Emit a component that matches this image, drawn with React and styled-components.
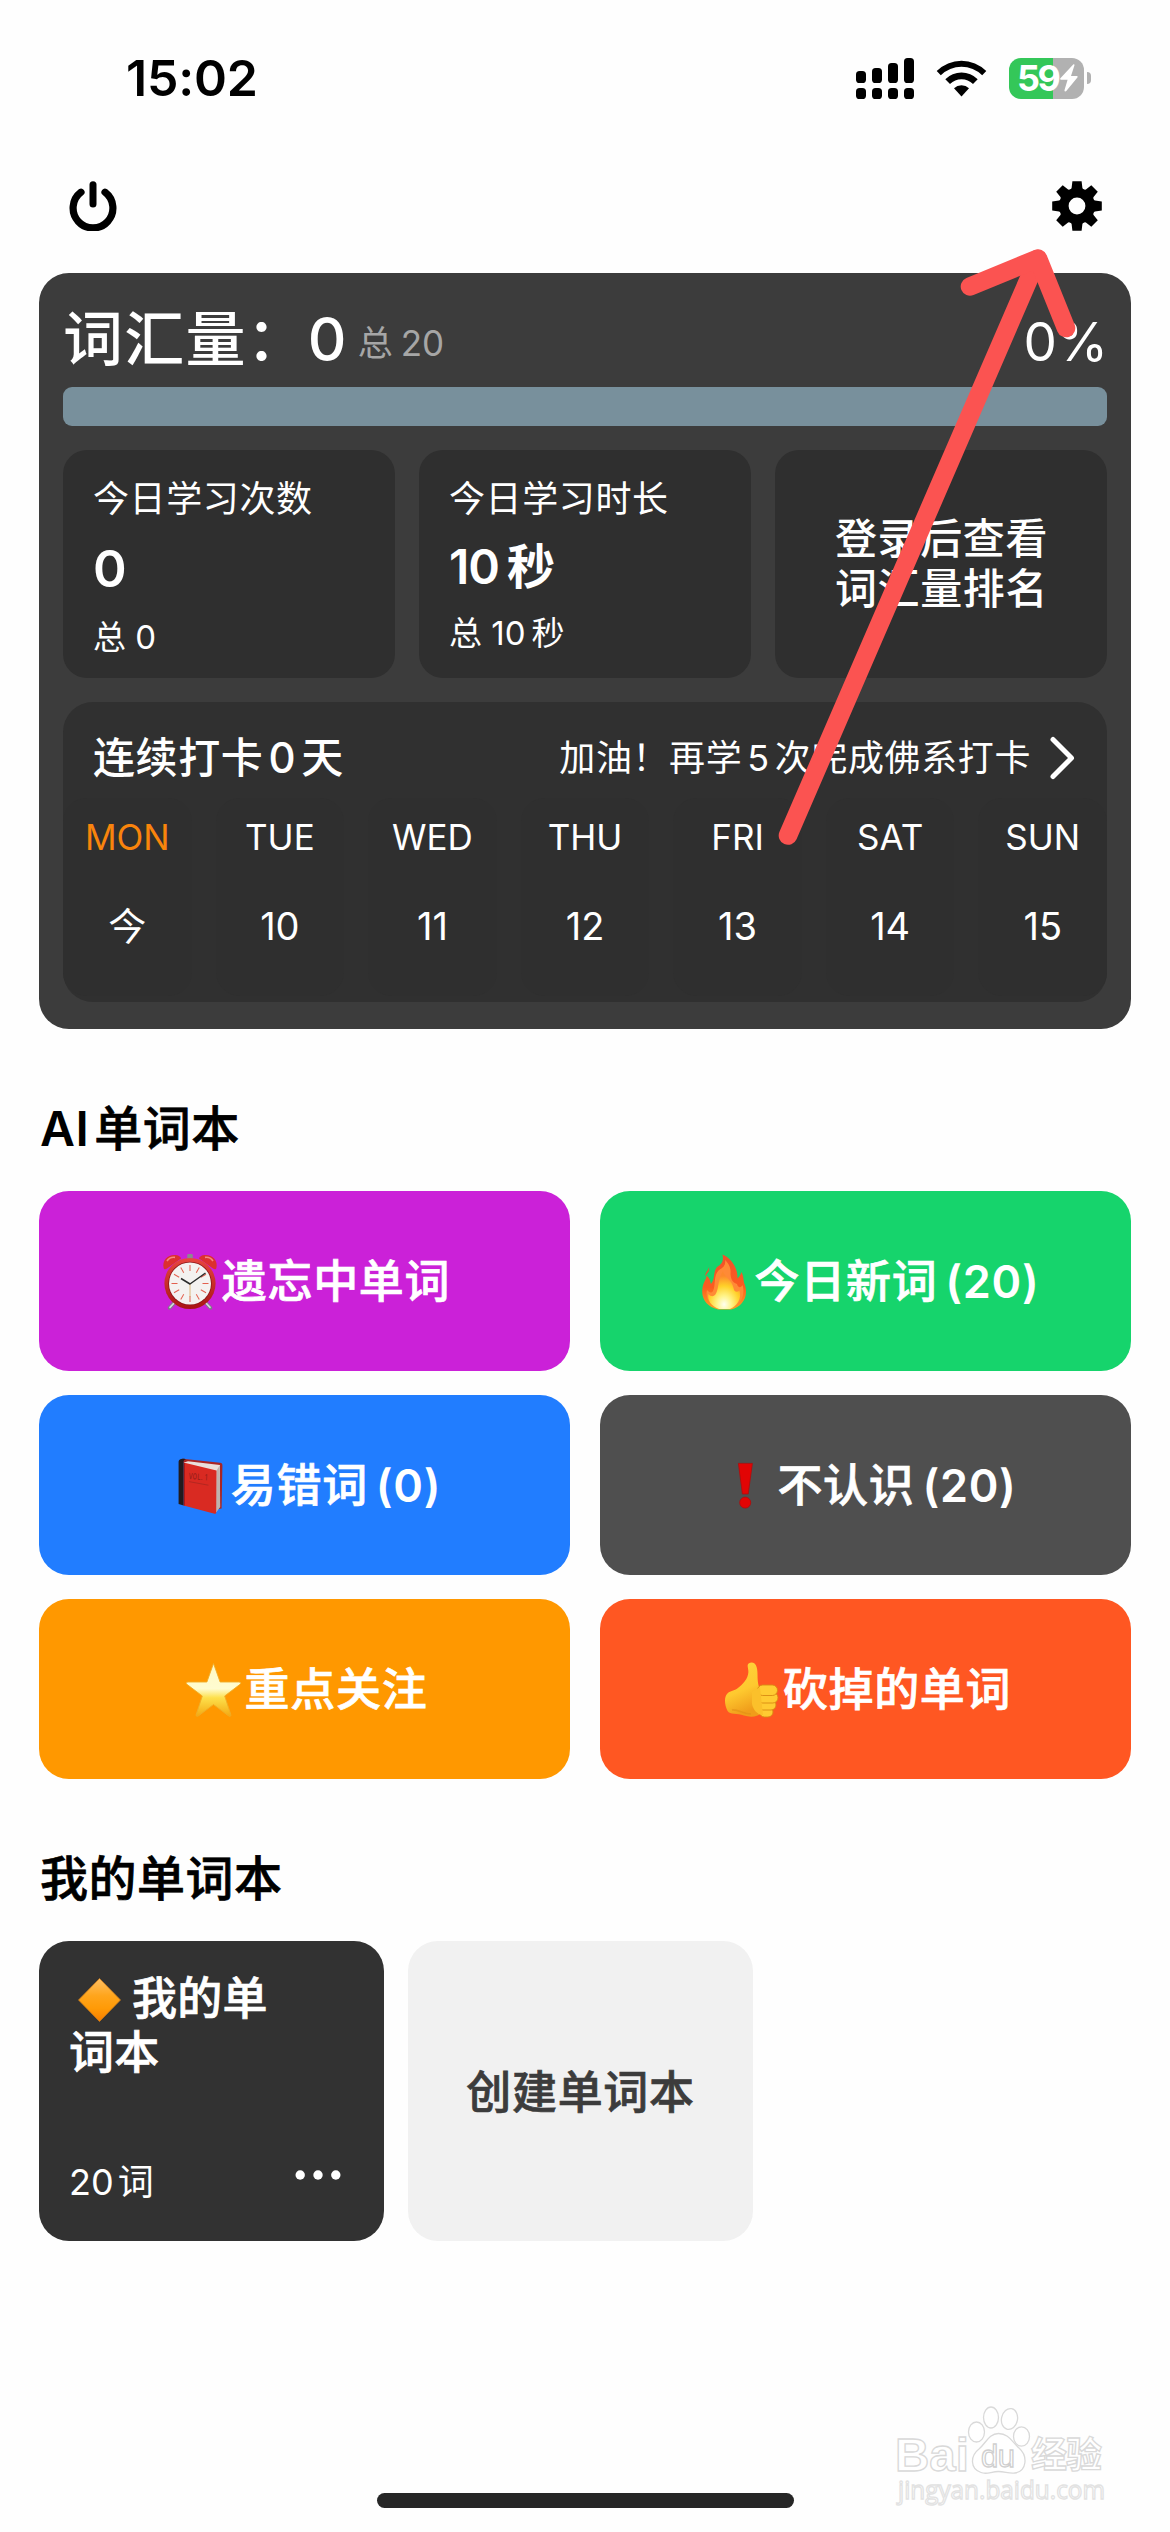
import React from 'react';
import styled, { createGlobalStyle } from 'styled-components';

const GlobalStyle = createGlobalStyle`
  * {
    box-sizing: border-box;
  }

  body {
    margin: 0;
    background: #fefefe;
    font-family: Inter, 'Noto Sans CJK SC', sans-serif;
    color: #000;
  }

  svg {
    display: block;
    flex-shrink: 0;
  }
`;

const Page = styled.div`
  position: relative;
  width: 1170px;
  height: 2532px;
  padding: 0 39px;
  display: flex;
  flex-direction: column;
  overflow: hidden;
`;

const StatusBar = styled.header`
  height: 156px;
  padding: 0 40px 0 87px;
  display: flex;
  align-items: center;
  justify-content: space-between;
`;

const Clock = styled.span`
  font-size: 50px;
  line-height: 60px;
  font-weight: 600;
  letter-spacing: -0.2px;
`;

const StatusIcons = styled.div`
  display: flex;
  align-items: center;
  gap: 22px;
`;

const Battery = styled.div`
  display: flex;
  align-items: center;
  gap: 3px;
`;

const BatteryBody = styled.div`
  width: 75px;
  height: 41px;
  padding-left: 8px;
  border-radius: 12px;
  background: linear-gradient(90deg, #34c759 59%, #b1b1b1 59%);
  color: #fff;
  display: flex;
  align-items: center;
  font-size: 36px;
  line-height: 41px;
  font-weight: 700;
  letter-spacing: -2.6px;

  svg {
    margin-left: 2px;
  }
`;

const BatteryTip = styled.div`
  width: 4px;
  height: 12px;
  border-radius: 0 6px 6px 0;
  background: #b1b1b1;
`;

const TopActions = styled.div`
  height: 100px;
  padding: 0 29px 0 30px;
  display: flex;
  align-items: center;
  justify-content: space-between;
`;

const Summary = styled.section`
  height: 756px;
  margin-top: 17px;
  padding: 24px;
  border-radius: 30px;
  background: #3c3c3c;
  color: #fff;
  display: flex;
  flex-direction: column;
`;

const SummaryHead = styled.div`
  height: 90px;
  display: flex;
  align-items: baseline;
`;

const VocabTitle = styled.span`
  font-size: 60px;
  line-height: 84px;
  font-weight: 500;
  letter-spacing: 1.2px;
`;

const VocabTotal = styled.span`
  margin-left: 10px;
  padding-top: 1px;
  align-self: center;
  font-size: 35px;
  line-height: 80px;
  color: #a6a6a6;
`;

const Percent = styled.span`
  margin-left: auto;
  font-size: 53px;
  letter-spacing: -1px;
`;

const Progress = styled.div`
  height: 39px;
  border-radius: 9px;
  background: #78909c;
`;

const Stats = styled.div`
  margin: 24px 0;
  display: grid;
  grid-template-columns: repeat(3, 1fr);
  gap: 24px;
`;

const StatCard = styled.div`
  height: 228px;
  padding: 25px 30px 0;
  border-radius: 24px;
  background: #2f2f2f;
`;

const StatLabel = styled.div`
  font-size: 36px;
  line-height: 48px;
  letter-spacing: 0.6px;
`;

const StatValue = styled.div`
  margin-top: 13px;
  font-size: ${(props) => props.$size || 48}px;
  line-height: ${(props) => (props.$size ? 65 : 61)}px;
  font-weight: 600;
  letter-spacing: -1px;
`;

const StatTotal = styled.div`
  margin-top: 12px;
  font-size: 33px;
  line-height: 48px;
`;

const Unit = styled.span`
  margin-left: ${(props) => props.$gap || 8}px;
  font-weight: ${(props) => props.$weight || 'inherit'};
`;

// medium text thickened a little, halfway to bold
const Strong = styled.span`
  font-weight: 500;
  -webkit-text-stroke: 0.7px currentColor;
`;

const LoginHint = styled(StatCard)`
  padding: 0 0 0 1px;
  display: flex;
  align-items: center;
  justify-content: center;
  font-size: 42px;
  line-height: 50px;
  font-weight: 500;
  letter-spacing: 0.6px;
`;

const Streak = styled.div`
  height: 300px;
  border-radius: 30px;
  background: #303030;
`;

const StreakHead = styled.div`
  height: 96px;
  padding: 15px 30px 0;
  display: flex;
  align-items: center;
`;

const StreakTitle = styled.span`
  font-size: 42px;
  line-height: 56px;
  font-weight: 500;
  letter-spacing: 0.6px;
`;

const Num = styled.span`
  margin: 0 5px;
`;

const StreakGoal = styled.span`
  margin: 0 19px 0 auto;
  font-size: 36px;
  line-height: 56px;
  letter-spacing: 0.6px;
`;

const Week = styled.div`
  display: grid;
  grid-template-columns: repeat(7, 1fr);
  gap: 24px;
`;

const Day = styled.div`
  height: 198px;
  border-radius: 24px;
  background: #2f2f2f;
  display: flex;
  flex-direction: column;
  align-items: center;
`;

const DayName = styled.span`
  margin-top: 15px;
  font-size: 35px;
  line-height: 48px;
  color: ${(props) => (props.$today ? '#f9840c' : '#fff')};
`;

const DayNumber = styled.span`
  margin-top: 41px;
  font-size: 38px;
  line-height: 48px;
`;

const SectionTitle = styled.h2`
  margin: 70px 0 0;
  height: 60px;
  padding-left: 1px;
  font-size: 48px;
  line-height: 60px;
  font-weight: 600;
  letter-spacing: 0.5px;

  span {
    margin-left: ${(props) => props.$gap || 0}px;
  }
`;

const Tiles = styled.div`
  margin-top: 32px;
  display: grid;
  grid-template-columns: 1fr 1fr;
  gap: 24px 30px;
`;

const Tile = styled.div`
  height: 180px;
  padding: 1px 0 0 2px;
  border-radius: 30px;
  background: ${(props) => props.$color};
  color: #fff;
  display: flex;
  align-items: center;
  justify-content: center;
  font-size: 45px;
  line-height: 60px;
  letter-spacing: 0.7px;

  svg {
    margin-right: 1px;
  }
`;

const Books = styled.div`
  margin-top: 32px;
  display: flex;
  gap: 24px;
`;

const Book = styled.div`
  width: 345px;
  height: 300px;
  padding: 31px 30px 34px;
  border-radius: 30px;
  background: #323232;
  color: #fff;
  display: flex;
  flex-direction: column;
  justify-content: space-between;
`;

const BookName = styled.div`
  font-size: 45px;
  line-height: 54px;
  letter-spacing: 0.3px;

  svg {
    display: inline-block;
    margin: 0 4px 0 2px;
    vertical-align: -8px;
  }
`;

const BookFoot = styled.div`
  display: flex;
  align-items: center;
  justify-content: space-between;
  padding-right: 13px;
  font-size: 36px;
  line-height: 50px;
`;

const NewBook = styled(Book)`
  padding: 4px 0 0;
  align-items: center;
  justify-content: center;
  background: #f1f1f1;
  color: #3c3c3c;
  font-size: 45px;
  line-height: 60px;
  letter-spacing: 0.7px;
`;

const HomeIndicator = styled.div`
  width: 417px;
  height: 15px;
  margin: auto auto 24px;
  border-radius: 8px;
  background: #262626;
`;

const Overlay = styled.svg`
  position: absolute;
  left: ${(props) => props.$x}px;
  top: ${(props) => props.$y}px;
  pointer-events: none;
`;

const SignalIcon = () => (
  <svg width="58" height="41" viewBox="0 0 58 41">
    <rect x="0" y="13" width="10" height="12" rx="3.6" />
    <rect x="16" y="10" width="10" height="15" rx="3.6" />
    <rect x="32" y="5" width="10" height="20" rx="3.6" />
    <rect x="48" y="0" width="10" height="25" rx="3.6" />
    {[0, 16, 32, 48].map((x) => (
      <rect key={x} x={x} y="30" width="10" height="11" rx="3.6" />
    ))}
  </svg>
);

const WifiIcon = () => (
  <svg width="51" height="41" viewBox="0 0 51 41">
    <path d="M.7 13 A35 35 0 0 1 50.3 13 L46.2 17.3 A29.5 29.5 0 0 0 4.8 17.3Z" />
    <path d="M9.3 21.2 A23 23 0 0 1 41.7 21.2 L37 26 A16.5 16.5 0 0 0 14 26Z" />
    <path d="M18 30.2 A11 11 0 0 1 33 30.2 L25.5 38.5Z" />
  </svg>
);

const BoltIcon = () => (
  <svg width="18" height="28" viewBox="0 0 18 28" fill="#fff">
    <path d="M13.2.6 L.4 14.3 C-.1 15 .2 15.7 1 15.7 H7.6 L4.6 25.8 C4.2 27.3 5.3 28 6.3 27 L17.4 13.4 C18 12.6 17.6 12 16.8 12 H11 L14.4 1.6 C14.8.2 14-.2 13.2.6Z" />
  </svg>
);

const PowerIcon = () => (
  <svg width="48" height="50" viewBox="0 0 48 50" fill="none" stroke="#000" strokeWidth="7.2" strokeLinecap="round">
    <path d="M12 11.2 A19.9 19.9 0 1 0 36 11.2" />
    <path d="M24 3.8 V23" strokeWidth="7" />
  </svg>
);

const GearIcon = () => (
  <svg width="50" height="50" viewBox="-25 -25 50 50">
    <circle r="13.2" fill="none" stroke="#000" strokeWidth="9.6" />
    {[0, 45, 90, 135, 180, 225, 270, 315].map((deg) => (
      <path key={deg} d="M-7 -15 L-5.4 -18 L-4.6 -24.8 H4.6 L5.4 -18 L7 -15Z" transform={`rotate(${deg})`} />
    ))}
  </svg>
);

const ChevronIcon = () => (
  <svg width="27" height="44" viewBox="0 0 27 44" fill="none" stroke="#fff" strokeWidth="5" strokeLinecap="round" strokeLinejoin="round">
    <path d="M3 3.5 L21.5 22 L3 40.5" />
  </svg>
);

const DotsIcon = () => (
  <svg width="46" height="30" viewBox="0 0 46 30" fill="#fff">
    <circle cx="5.2" cy="8" r="4.7" />
    <circle cx="23" cy="8" r="4.7" />
    <circle cx="40.8" cy="8" r="4.7" />
  </svg>
);

const AlarmIcon = () => (
  <svg width="60" height="56" viewBox="0 0 60 56">
    <defs>
      <linearGradient id="alarmRim" x1="0" y1="0" x2="0" y2="1">
        <stop offset="0" stopColor="#e8473f" />
        <stop offset="1" stopColor="#a81414" />
      </linearGradient>
    </defs>
    <path d="M14 48 L8.5 54 M44 48 L49.5 54" stroke="#7c7d84" strokeWidth="3.4" strokeLinecap="round" />
    <path d="M14 48 L9 53.4 M44 48 L49 53.4" stroke="#d5d7dc" strokeWidth="1.6" strokeLinecap="round" />
    <rect x="26.2" y="0" width="5.6" height="5" rx="1.2" fill="#8d8790" />
    <path d="M2.6 14 C.8 6 7 0 15 1 C18 1.5 20 3 20 4.6 L6 14.6 C4.3 15.6 3 15.4 2.6 14Z" fill="#dc3030" />
    <path d="M55.4 14 C57.2 6 51 0 43 1 C40 1.5 38 3 38 4.6 L52 14.6 C53.7 15.6 55 15.4 55.4 14Z" fill="#dc3030" />
    <path d="M6 7 C8 4 11 3 14 3.4 M44 3.4 C47 3 50 4 52 7" fill="none" stroke="#f48a80" strokeWidth="1.6" />
    <circle cx="29" cy="29.5" r="25.6" fill="url(#alarmRim)" />
    <circle cx="29" cy="29.5" r="21.8" fill="#8c1616" />
    <circle cx="29" cy="29.5" r="21" fill="#f4f2f0" />
    {[...Array(12)].map((_, i) => (
      <path key={i} d="M29 11 V17" stroke="#e2604f" strokeWidth="1" transform={`rotate(${i * 30} 29 29.5)`} />
    ))}
    <path d="M29 30 V43" stroke="#d8b070" strokeWidth="0.9" />
    <path d="M20 24.5 L29 30 L44.5 19" fill="none" stroke="#2c2c2c" strokeWidth="1.5" strokeLinejoin="round" />
  </svg>
);

const FireIcon = () => (
  <svg width="60" height="56" viewBox="0 0 60 56">
    <defs>
      <linearGradient id="fireOuter" x1="0" y1="0" x2="0" y2="1">
        <stop offset="0" stopColor="#f1502a" />
        <stop offset="0.6" stopColor="#fb5c20" />
        <stop offset="1" stopColor="#fba321" />
      </linearGradient>
      <radialGradient id="fireInner" cx="0.5" cy="0.88" r="0.75">
        <stop offset="0" stopColor="#fffff0" />
        <stop offset="0.3" stopColor="#fff48a" />
        <stop offset="0.65" stopColor="#ffd129" />
        <stop offset="1" stopColor="#fd8a2c" />
      </radialGradient>
    </defs>
    <path d="M28.5 .5 C35 3 44 12 43.5 24.5 C46 22 47 20 47.3 18 C50 22 49 26 50.5 30 C55 42 49 53 37 55.5 H24 C13 53 7 45 8.4 35 C8.8 29 12 26 12.6 21.5 C15.6 24 16.4 27 16.8 30 C21.5 25 18.8 18 23 13 C29 10 29.5 6 28.5 .5Z" fill="url(#fireOuter)" />
    <path d="M15 13 C14.4 17 10.6 18.8 11.3 22 C13 19 16 17.5 15 13Z" fill="#f1502a" />
    <path d="M31 6 C36 11 37 15 36.5 20 C37 27 40 29 43 30 C44 34 47 34 48.6 31 C52 43 45 52 36 55 H25 C16 52 11 44 13 36 C15 38 17 40 19 37 C22 32 19 21 25 16 C30 13.5 32 10 31 6Z" fill="#ff8a36" />
    <path d="M29 17 C30.5 23 38 26 39.5 34 C40.2 38 43 39 45.5 36.5 C48 45 43 52 36 55 H25 C17 52 13 46 14.4 40 C17 43 20 43 22 39.5 C25 34 24 24 29 17Z" fill="url(#fireInner)" />
  </svg>
);

const RedBookIcon = () => (
  <svg width="60" height="56" viewBox="0 0 60 56">
    <path d="M10 2.5 C12 .2 14 .8 17 1.2 L50 4.8 C52 5 52.6 6 52.4 8 L51.6 50.5 L46 51.5 L16 6Z" fill="#a92524" />
    <path d="M14 4.5 L18 3.2 L50 7 L50 48 L46 54 L15 45Z" fill="#e9dfdb" />
    <path d="M49.8 7 L46.4 13 L46 54.5 L50.2 49Z" fill="#bfb2ae" />
    <path d="M13.5 4.6 L46.5 12.6 L46.2 54.8 C46 55.8 45.4 56 44.6 55.7 L13.5 47.4Z" fill="#d92a22" />
    <path d="M8.6 3.4 C9 1 12 .2 16 1.3 C13.5 2 13.3 3.2 13.6 5 V47.5 L8.6 46Z" fill="#221b1e" />
    <path d="M14.4 5 V47.5" stroke="#a41717" strokeWidth="1" />
    <text x="18.5" y="21" transform="rotate(4 18 20)" fontSize="8.5" fontWeight="500" textLength="19" lengthAdjust="spacingAndGlyphs" fill="#941d18">VOL. 1</text>
    <path d="M19 23.6 L38.4 27.2" stroke="#a92620" strokeWidth="0.8" />
  </svg>
);

const ExclamationIcon = () => (
  <svg width="60" height="56" viewBox="0 0 60 56" fill="#e20404" stroke="#b00b0b" strokeWidth="0.8">
    <path d="M22.4 5.4 H36.4 L32.2 36 H26.4Z" />
    <circle cx="29.2" cy="44.6" r="5.5" />
  </svg>
);

const StarIcon = () => (
  <svg width="60" height="56" viewBox="0 0 60 56">
    <defs>
      <linearGradient id="star" x1="0" y1="0" x2="0" y2="1">
        <stop offset="0" stopColor="#fff9c4" />
        <stop offset="0.48" stopColor="#fffcd0" />
        <stop offset="0.65" stopColor="#fde04c" />
        <stop offset="1" stopColor="#f3a912" />
      </linearGradient>
    </defs>
    <path
      d="M29.5 1.4 L36.1 20 H54.9 C57.1 20 57.3 21.4 55.7 22.6 L40.7 34 L46.7 52.2 C47.3 54.2 46.1 54.8 44.5 53.8 L29.5 42.6 L14.5 53.8 C12.9 54.8 11.7 54.2 12.3 52.2 L18.3 34 L3.3 22.6 C1.7 21.4 1.9 20 4.1 20 H22.9Z"
      fill="url(#star)"
      stroke="#efad28"
      strokeWidth="0.9"
      strokeLinejoin="round"
    />
  </svg>
);

const ThumbIcon = () => (
  <svg width="60" height="56" viewBox="0 0 60 56">
    <defs>
      <linearGradient id="thumb" x1="0" y1="0" x2="0.3" y2="1">
        <stop offset="0" stopColor="#ffd43d" />
        <stop offset="0.6" stopColor="#fec92f" />
        <stop offset="1" stopColor="#f09d1a" />
      </linearGradient>
    </defs>
    <path d="M26.6 1.5 C29.5 -.4 33.4 .6 34.6 5 C36.4 11 34.6 17 37 25 L39 51 C36 55 28 55.5 22 53.5 C15 51 8 53 5.6 49 C2.5 43 2 35.5 5 32 C8 28.6 11.6 29 15 26.8 C21 22 26 17 26.4 10 C26.4 6 24.6 3 26.6 1.5Z" fill="url(#thumb)" />
    <g fill="#ffcb32" stroke="#d98a12" strokeWidth="0.9">
      <rect x="37.5" y="45" width="13.5" height="10" rx="5" />
      <rect x="36" y="38" width="18" height="10" rx="5" />
      <rect x="35.5" y="30.5" width="20.5" height="10.5" rx="5.2" />
      <rect x="35.5" y="23" width="20" height="10.5" rx="5.2" />
    </g>
    <path d="M30 30 C33 27 36 27 38 25 L41 53 C35 53 31 47 30 42Z" fill="#fbc02b" />
    <path d="M10 48 C16 47 21 52 29 52" fill="none" stroke="#e08f16" strokeWidth="1.6" opacity="0.6" />
  </svg>
);

const DiamondIcon = () => (
  <svg width="57" height="46" viewBox="0 0 57 46">
    <defs>
      <linearGradient id="diamond" x1="0" y1="0" x2="0" y2="1">
        <stop offset="0" stopColor="#ffc063" />
        <stop offset="0.4" stopColor="#ffa51c" />
        <stop offset="0.7" stopColor="#ff9a06" />
        <stop offset="1" stopColor="#f57c00" />
      </linearGradient>
    </defs>
    <path d="M28.5 1.5 L49.5 23 L28.5 44.5 L7.5 23Z" fill="url(#diamond)" strokeLinejoin="round" stroke="#c97a1a" strokeWidth="0.8" />
  </svg>
);

// red pointer towards the settings gear
const Pointer = () => (
  <Overlay $x={770} $y={240} width="330" height="620" viewBox="770 240 330 620" fill="none" stroke="#fb5351" strokeWidth="18.6" strokeLinecap="round" strokeLinejoin="round">
    <path d="M788 835.5 L1037.5 259" />
    <path d="M970 286.5 L1038 258.5 L1066 328" />
  </Overlay>
);

const Watermark = () => (
  <Overlay $x={880} $y={2400} width="260" height="128" viewBox="880 2400 260 128" fill="#fff" stroke="#d9d9d9" strokeWidth="1.3">
    <text x="895" y="2471" fontFamily="Liberation Sans" fontWeight="700" fontSize="47" textLength="74" lengthAdjust="spacingAndGlyphs">Bai</text>
    <ellipse cx="976.5" cy="2432" rx="8" ry="10" />
    <ellipse cx="991" cy="2417.5" rx="7.5" ry="10.5" />
    <ellipse cx="1009.5" cy="2419" rx="8" ry="10.5" transform="rotate(12 1009.5 2419)" />
    <ellipse cx="1021.5" cy="2436.5" rx="8" ry="9.7" />
    <path d="M998.5 2433.5 C1009 2433.5 1012 2442 1019 2448 C1028 2456 1027 2471 1015 2473 C1009 2474 1005 2471.5 998.5 2471.5 C991 2471.5 987 2475 981 2472.5 C970 2469 970 2456 979 2449 C986 2443 989 2433.5 998.5 2433.5Z" />
    <text x="981" y="2467" fontFamily="Liberation Sans" fontSize="31" textLength="34" stroke="#cfcfcf">du</text>
    <text x="1031" y="2468" fontFamily="Noto Sans CJK SC" fontWeight="700" fontSize="36" textLength="71">经验</text>
    <text x="898" y="2499" fontFamily="Open Sans" fontSize="25" textLength="207" lengthAdjust="spacingAndGlyphs" stroke="#e2e2e2">jingyan.baidu.com</text>
  </Overlay>
);

const tiles = [
  { color: '#cb21d8', icon: <AlarmIcon />, label: '遗忘中单词' },
  { color: '#16d46c', icon: <FireIcon />, label: '今日新词', count: 20 },
  { color: '#217dff', icon: <RedBookIcon />, label: '易错词', count: 0 },
  { color: '#4f4f4f', icon: <ExclamationIcon />, label: '不认识', count: 20 },
  { color: '#ff9800', icon: <StarIcon />, label: '重点关注' },
  { color: '#ff5722', icon: <ThumbIcon />, label: '砍掉的单词' },
];

const week = [
  { name: 'MON', day: '今' },
  { name: 'TUE', day: '10' },
  { name: 'WED', day: '11' },
  { name: 'THU', day: '12' },
  { name: 'FRI', day: '13' },
  { name: 'SAT', day: '14' },
  { name: 'SUN', day: '15' },
];

const App = () => {
  return (
    <Page>
      <GlobalStyle />

      <StatusBar>
        <Clock>15:02</Clock>
        <StatusIcons>
          <SignalIcon />
          <WifiIcon />
          <Battery>
            <BatteryBody>
              59
              <BoltIcon />
            </BatteryBody>
            <BatteryTip />
          </Battery>
        </StatusIcons>
      </StatusBar>

      <TopActions>
        <PowerIcon />
        <GearIcon />
      </TopActions>

      <Summary>
        <SummaryHead>
          <VocabTitle>词汇量：0</VocabTitle>
          <VocabTotal>总<Unit>20</Unit></VocabTotal>
          <Percent>0%</Percent>
        </SummaryHead>
        <Progress />

        <Stats>
          <StatCard>
            <StatLabel>今日学习次数</StatLabel>
            <StatValue $size={51}>0</StatValue>
            <StatTotal>总 0</StatTotal>
          </StatCard>
          <StatCard>
            <StatLabel>今日学习时长</StatLabel>
            <StatValue>10<Unit>秒</Unit></StatValue>
            <StatTotal>总 10<Unit $gap={6}>秒</Unit></StatTotal>
          </StatCard>
          <LoginHint>
            登录后查看
            <br />
            词汇量排名
          </LoginHint>
        </Stats>

        <Streak>
          <StreakHead>
            <StreakTitle>连续打卡<Num>0</Num>天</StreakTitle>
            <StreakGoal>加油！再学<Num>5</Num>次完成佛系打卡</StreakGoal>
            <ChevronIcon />
          </StreakHead>
          <Week>
            {week.map((item, i) => (
              <Day key={item.name}>
                <DayName $today={i === 0}>{item.name}</DayName>
                <DayNumber>{item.day}</DayNumber>
              </Day>
            ))}
          </Week>
        </Streak>
      </Summary>

      <SectionTitle $gap={5}>AI<Strong>单词本</Strong></SectionTitle>
      <Tiles>
        {tiles.map((tile) => (
          <Tile key={tile.label} $color={tile.color}>
            {tile.icon}
            <Strong>{tile.label}</Strong>
            {tile.count !== undefined && <Unit $weight={600}>({tile.count})</Unit>}
          </Tile>
        ))}
      </Tiles>

      <SectionTitle><Strong>我的单词本</Strong></SectionTitle>
      <Books>
        <Book>
          <BookName>
            <DiamondIcon />
            <Strong>
              我的单
              <br />
              词本
            </Strong>
          </BookName>
          <BookFoot>
            <span>20<Unit $gap={4}>词</Unit></span>
            <DotsIcon />
          </BookFoot>
        </Book>
        <NewBook>
          <Strong>创建单词本</Strong>
        </NewBook>
      </Books>

      <HomeIndicator />
      <Pointer />
      <Watermark />
    </Page>
  );
};

export default App;
